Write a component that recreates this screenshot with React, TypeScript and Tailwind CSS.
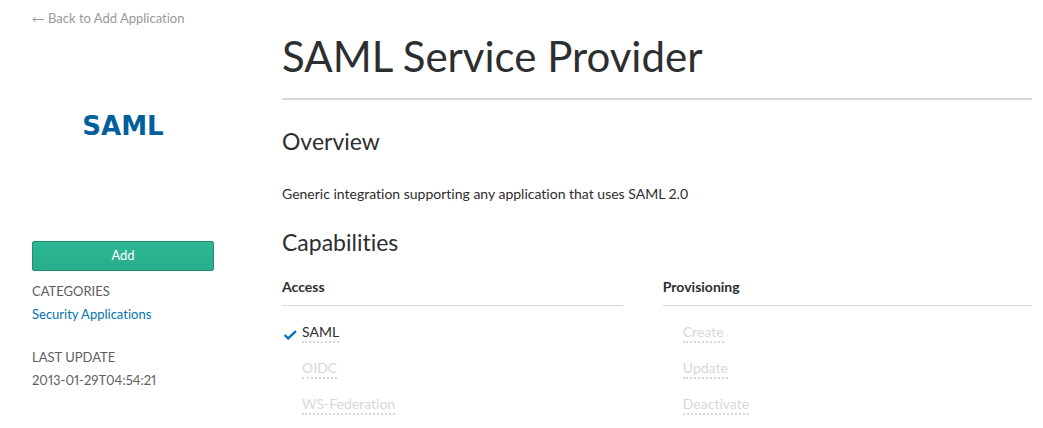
type Capability = { name: string; enabled?: boolean };

const access: Capability[] = [
  { name: "SAML", enabled: true },
  { name: "OIDC" },
  { name: "WS-Federation" },
];

const provisioning: Capability[] = [
  { name: "Create" },
  { name: "Update" },
  { name: "Deactivate" },
];

function CheckIcon() {
  return (
    <svg viewBox="0 0 14 12" className="mt-1 h-3 w-3.5" fill="none" aria-hidden="true">
      <path d="M1.6 6 L5.2 9.4 L12.9 2.2" stroke="#0074be" strokeWidth="2.3" />
    </svg>
  );
}

function CapabilityList({ title, items }: { title: string; items: Capability[] }) {
  return (
    <section>
      <h3 className="border-b border-[#d8d8d8] pb-2 text-sm leading-5 font-bold">{title}</h3>
      <ul className="mt-[15px] flex flex-col gap-3">
        {items.map((item) => (
          <li key={item.name} className="flex h-6 items-center">
            <span className="flex w-5 shrink-0 pl-px">{item.enabled && <CheckIcon />}</span>
            <span
              className={
                item.enabled
                  ? "border-b-2 border-dotted border-[#d8d8d8] text-sm leading-[18px]"
                  : "border-b-2 border-dotted border-[#d8d8d8] text-sm leading-[18px] text-[#d8d8d8]"
              }
            >
              {item.name}
            </span>
          </li>
        ))}
      </ul>
    </section>
  );
}

export default function App() {
  return (
    <div className="flex bg-white pr-[11px] pl-8 font-['Lato',sans-serif] text-[#2d2e2f] [font-variant-ligatures:none]">
      <aside className="mr-[68px] w-[182px] shrink-0 text-[13px] text-[#5e5e5e]">
        <a href="#add-application" className="mt-2 flex items-center gap-1 leading-5 whitespace-nowrap text-[#999999]">
          <svg viewBox="0 0 12 8" className="mt-1 h-2 w-3" fill="none" stroke="currentColor" aria-hidden="true">
            <path d="M12 3.5 H1 M3.5 1 L1 3.5 L3.5 6" />
          </svg>
          Back to Add Application
        </a>
        <div className="mt-[82px] flex h-8 items-center justify-center font-['DejaVu_Sans',sans-serif] text-[26px] font-bold text-[#00609c]">
          SAML
        </div>
        <button
          type="button"
          className="mt-[99px] block h-[30px] w-full rounded-xs border border-[#1f8f6f] bg-linear-to-b from-[#2db793] to-[#27ae8c] text-[13px] text-white"
        >
          Add
        </button>
        <dl className="mt-[9px] leading-[23px] proportional-nums">
          <dt>CATEGORIES</dt>
          <dd>
            <a href="#security" className="text-[#0074b3]">Security Applications</a>
          </dd>
          <dt className="mt-5">LAST UPDATE</dt>
          <dd>2013-01-29T04:54:21</dd>
        </dl>
      </aside>
      <main className="min-w-0 flex-1">
        <h1 className="mt-8 border-b-2 border-[#d8d8d8] pb-[18px] text-[42px] leading-[48px]">SAML Service Provider</h1>
        <h2 className="mt-[27px] text-[23px] leading-7">Overview</h2>
        <p className="mt-[29px] text-sm leading-5">
          Generic integration supporting any application that uses SAML 2.0
        </p>
        <h2 className="mt-6 text-[23px] leading-7">Capabilities</h2>
        <div className="mt-[21px] grid grid-cols-[12fr_13fr] gap-10">
          <CapabilityList title="Access" items={access} />
          <CapabilityList title="Provisioning" items={provisioning} />
        </div>
      </main>
    </div>
  );
}
